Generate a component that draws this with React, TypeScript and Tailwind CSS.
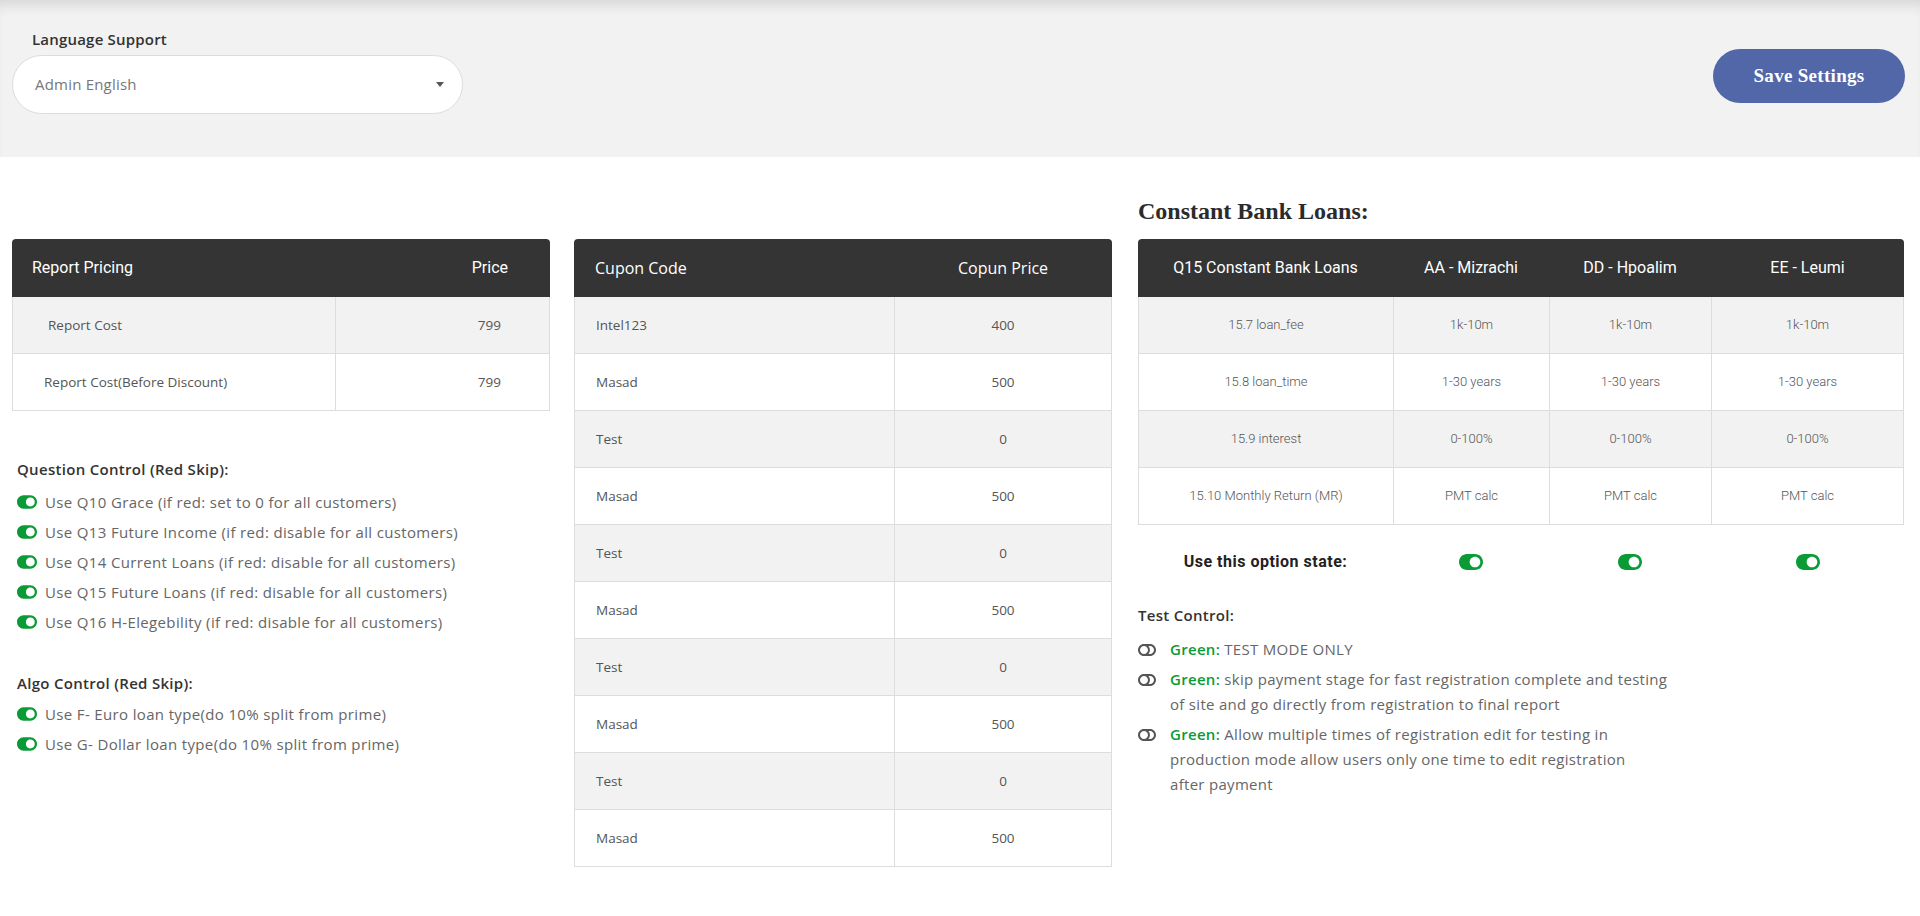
import { FaToggleOn, FaToggleOff } from 'react-icons/fa';

const body = { fontFamily: '"Open Sans", "Noto Sans", sans-serif' };
const serif = { fontFamily: '"Liberation Serif", "DejaVu Serif", serif' };
const roboto = { fontFamily: 'Roboto, "Liberation Sans", sans-serif' };

const coupons = [
  ['Intel123', '400'],
  ['Masad', '500'],
  ['Test', '0'],
  ['Masad', '500'],
  ['Test', '0'],
  ['Masad', '500'],
  ['Test', '0'],
  ['Masad', '500'],
  ['Test', '0'],
  ['Masad', '500'],
];

const bankRows = [
  ['15.7 loan_fee', '1k-10m'],
  ['15.8 loan_time', '1-30 years'],
  ['15.9 interest', '0-100%'],
  ['15.10 Monthly Return (MR)', 'PMT calc'],
];

const questions = [
  'Use Q10 Grace (if red: set to 0 for all customers)',
  'Use Q13 Future Income (if red: disable for all customers)',
  'Use Q14 Current Loans (if red: disable for all customers)',
  'Use Q15 Future Loans (if red: disable for all customers)',
  'Use Q16 H-Elegebility (if red: disable for all customers)',
];

const algos = [
  'Use F- Euro loan type(do 10% split from prime)',
  'Use G- Dollar loan type(do 10% split from prime)',
];

function ToggleItem({ text }: { text: string }) {
  return (
    <div className="flex h-[30px] items-center gap-[8px]">
      <FaToggleOn size={20} className="text-[#0b9b36]" />
      <span className="text-[15px] tracking-[0.35px] text-[#666]">{text}</span>
    </div>
  );
}

function TestItem({ lines }: { lines: string[] }) {
  return (
    <div className="flex gap-[14px]">
      <div className="flex h-[25px] items-center">
        <FaToggleOff size={18} className="text-[#555]" />
      </div>
      <div className="text-[15px] leading-[25px] tracking-[0.3px] text-[#666] whitespace-nowrap">
        <span className="font-semibold text-[#0b9b36]">Green:</span> {lines[0]}
        {lines.slice(1).map((l, i) => (
          <div key={i}>{l}</div>
        ))}
      </div>
    </div>
  );
}

export default function App() {
  return (
    <div className="min-h-screen bg-white" style={body}>
      {/* top settings band */}
      <div className="flex h-[157px] justify-between bg-[#f2f2f2] shadow-[inset_0_12px_14px_-8px_rgba(0,0,0,0.13)]">
        <div className="pl-[12px] pt-[29px]">
          <div className="pl-[20px] text-[15px] font-semibold leading-[20px] tracking-[0.2px] text-[#333]">Language Support</div>
          <div className="mt-[6px] flex h-[59px] w-[451px] items-center justify-between rounded-full border border-[#dcdcdc] bg-white pl-[22px] pr-[18px]">
            <span className="text-[15px] tracking-[0.2px] text-[#777]">Admin English</span>
            <span className="h-0 w-0 border-x-[4px] border-t-[5px] border-x-transparent border-t-[#555]" />
          </div>
        </div>
        <div className="pr-[15px] pt-[49px]">
          <button
            className="h-[54px] w-[192px] rounded-full bg-[#5167a8] text-[19px] font-bold tracking-[0.3px] text-white"
            style={serif}
          >
            Save Settings
          </button>
        </div>
      </div>

      <div className="flex pl-[12px]">
        {/* left column */}
        <div className="w-[538px] pt-[82px]">
          <div className="rounded-t-[4px] bg-[#343434]">
            <div className="grid h-[58px] grid-cols-[323px_1fr] items-center text-[16px] text-white" style={roboto}>
              <div className="pl-[20px]">Report Pricing</div>
              <div className="pr-[42px] text-right">Price</div>
            </div>
          </div>
          <div className="border-x border-b border-[#ddd] text-[13.5px] text-[#555]">
            <div className="grid h-[57px] grid-cols-[323px_1fr] border-b border-[#ddd] bg-[#f2f2f2]">
              <div className="flex items-center border-r border-[#ddd] pl-[35px]">Report Cost</div>
              <div className="flex items-center justify-end pr-[48px]">799</div>
            </div>
            <div className="grid h-[56px] grid-cols-[323px_1fr] bg-white">
              <div className="flex items-center border-r border-[#ddd] pl-[31px]">Report Cost(Before Discount)</div>
              <div className="flex items-center justify-end pr-[48px]">799</div>
            </div>
          </div>

          <div className="pl-[5px]">
            <div className="mt-[48px] text-[15px] font-semibold leading-[20px] tracking-[0.3px] text-[#333]">Question Control (Red Skip):</div>
            <div className="mt-[8px]">
              {questions.map((q) => (
                <ToggleItem key={q} text={q} />
              ))}
            </div>
            <div className="mt-[36px] text-[15px] font-semibold leading-[20px] tracking-[0.3px] text-[#333]">Algo Control (Red Skip):</div>
            <div className="mt-[6px]">
              {algos.map((q) => (
                <ToggleItem key={q} text={q} />
              ))}
            </div>
          </div>
        </div>

        {/* middle column */}
        <div className="ml-[24px] w-[538px] pt-[82px]">
          <div className="rounded-t-[4px] bg-[#343434]">
            <div className="grid h-[58px] grid-cols-[320px_1fr] items-center text-[16px] text-white">
              <div className="pl-[21px]">Cupon Code</div>
              <div className="text-center">Copun Price</div>
            </div>
          </div>
          <div className="border-x border-[#ddd] text-[13.5px] text-[#555]">
            {coupons.map(([code, price], i) => (
              <div
                key={i}
                className={`grid h-[57px] grid-cols-[320px_1fr] border-b border-[#ddd] ${i % 2 === 0 ? 'bg-[#f2f2f2]' : 'bg-white'}`}
              >
                <div className="flex items-center border-r border-[#ddd] pl-[21px]">{code}</div>
                <div className="flex items-center justify-center">{price}</div>
              </div>
            ))}
          </div>
        </div>

        {/* right column */}
        <div className="ml-[26px] w-[766px] pt-[39px]">
          <div className="mb-[13px] text-[24px] font-bold leading-[30px] text-[#2b2b2b]" style={serif}>
            Constant Bank Loans:
          </div>
          <div className="rounded-t-[4px] bg-[#343434]">
            <div
              className="grid h-[58px] grid-cols-[255px_156px_162px_1fr] items-center text-center text-[16px] text-white"
              style={roboto}
            >
              <div>Q15 Constant Bank Loans</div>
              <div>AA - Mizrachi</div>
              <div>DD - Hpoalim</div>
              <div>EE - Leumi</div>
            </div>
          </div>
          <div className="border-x border-[#ddd] text-[13px] font-light text-[#555]" style={roboto}>
            {bankRows.map(([label, val], i) => (
              <div
                key={label}
                className={`grid h-[57px] grid-cols-[255px_156px_162px_1fr] border-b border-[#ddd] text-center ${i % 2 === 0 ? 'bg-[#f2f2f2]' : 'bg-white'}`}
              >
                <div className="flex items-center justify-center border-r border-[#ddd]">{label}</div>
                <div className="flex items-center justify-center border-r border-[#ddd]">{val}</div>
                <div className="flex items-center justify-center border-r border-[#ddd]">{val}</div>
                <div className="flex items-center justify-center">{val}</div>
              </div>
            ))}
          </div>

          <div className="mt-[14px] grid h-[46px] grid-cols-[255px_156px_162px_1fr] items-center">
            <div className="text-center text-[16px] font-bold tracking-[0.5px] text-[#222]" style={roboto}>Use this option state:</div>
            <div className="flex justify-center"><FaToggleOn size={24} className="text-[#0b9b36]" /></div>
            <div className="flex justify-center"><FaToggleOn size={24} className="text-[#0b9b36]" /></div>
            <div className="flex justify-center"><FaToggleOn size={24} className="text-[#0b9b36]" /></div>
          </div>

          <div className="mt-[20px] text-[15px] font-semibold leading-[20px] tracking-[0.3px] text-[#333]">Test Control:</div>
          <div className="mt-[12px] flex flex-col gap-[5px]">
            <TestItem lines={['TEST MODE ONLY']} />
            <TestItem
              lines={[
                'skip payment stage for fast registration complete and testing',
                'of site and go directly from registration to final report',
              ]}
            />
            <TestItem
              lines={[
                'Allow multiple times of registration edit for testing in',
                'production mode allow users only one time to edit registration',
                'after payment',
              ]}
            />
          </div>
        </div>
      </div>
    </div>
  );
}
